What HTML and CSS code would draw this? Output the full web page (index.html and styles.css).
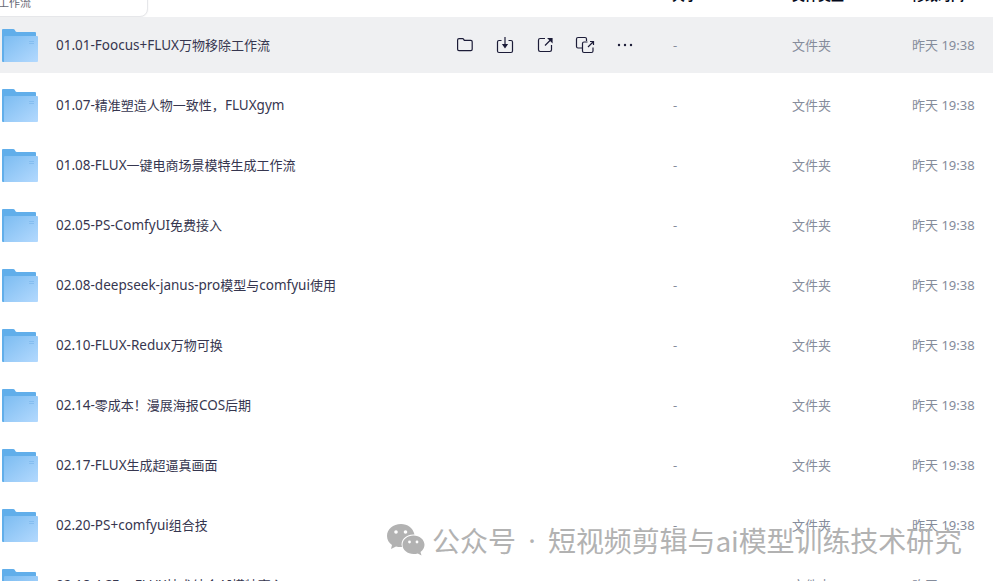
FILE: index.html
```html
<!DOCTYPE html>
<html lang="zh-CN">
<head>
    <meta charset="UTF-8">
    <meta name="viewport" content="width=device-width, initial-scale=1.0">
    <title>工作流</title>
    <link rel="stylesheet" href="styles.css">
</head>
<body>
    <svg width="0" height="0" class="defs">
        <defs>
            <linearGradient id="front" x1="0" y1="0" x2="1" y2="1">
                <stop offset="0" stop-color="#7cbcf1"/>
                <stop offset="1" stop-color="#b3d9fe"/>
            </linearGradient>
            <symbol id="folder" viewBox="0 0 40 40">
                <path fill="#61aeea" d="M2 5q0-1 1-1h10.200q1 0 1.500.8l.8 1.500q.4.700 1.300.7H35q1 0 1 1v29H3q-1 0-1-1z"/>
                <path fill="url(#front)" d="M4 12q0-1 1-1h32q1 0 1 1v24q0 1-1 1H4z"/>
                <path fill="#84bdf0" d="M29 16h5v1h-5zM29 18h5v1h-5z"/>
            </symbol>
        </defs>
    </svg>

    <div class="header">
        <span class="name"></span>
        <span class="size">大小</span>
        <span class="type">文件类型</span>
        <span class="time">修改时间</span>
    </div>
    <div class="tooltip">工作流</div>

    <div class="list" id="list">
        <div class="row active">
            <svg class="folder"><use href="#folder"/></svg>
            <span class="name"><span class="latin">01.01-Foocus+FLUX</span>万物移除工作流</span>
            <div class="actions">
                <svg viewBox="0 0 20 20"><path d="M2.600 5q0-1.400 1.400-1.400h3.700q.5 0 .8.500l.8 1.300h6.500q1.400 0 1.400 1.400v7.400q0 1.400-1.400 1.400H4q-1.400 0-1.400-1.400z"/></svg>
                <svg viewBox="0 0 20 20"><path d="M6.500 5.500H4q-1.500 0-1.500 1.500v9q0 1.500 1.500 1.500h12q1.500 0 1.500-1.500V7q0-1.500-1.500-1.500h-2.500M10 2v8"/><path class="solid" d="M8 9.500h4l-2 3z"/></svg>
                <svg viewBox="0 0 20 20"><path d="M10 3.500H5.200q-1.700 0-1.700 1.700v9.600q0 1.700 1.700 1.700h9.600q1.700 0 1.700-1.700V10M10 10.500l6-6"/><path class="solid" d="M13.500 3.500H17V7z"/></svg>
                <svg viewBox="0 0 20 20"><path d="M11.500 6V4q0-1.500-1.500-1.500H3Q1.500 2.500 1.500 4v7.500Q1.500 13 3 13h4M12.500 7H9Q7.500 7 7.500 8.500V16q0 1.500 1.500 1.500h7.500q1.500 0 1.500-1.500v-3.500M13 12l5-5M15 6.500h3.500V10"/></svg>
                <svg viewBox="0 0 20 20" class="more"><circle cx="4" cy="10" r="1.200"/><circle cx="10" cy="10" r="1.200"/><circle cx="16" cy="10" r="1.200"/></svg>
            </div>
            <span class="size">-</span>
            <span class="type">文件夹</span>
            <span class="time">昨天 19:38</span>
        </div>
    </div>

    <div class="watermark">
        <svg viewBox="0 0 38 32">
            <path d="M14 0C6 0 0 5.300 0 12c0 4 2 7 5 9l-1 4 5-2.600c2 .5 3.500.7 6 .6-2-7 4-13 12.500-12.500C26 4 20.500 0 14 0z"/>
            <path d="M26.500 11.500c-6 0-11 4-11 9.300s5 9.200 11 9.200c1.500 0 3-.2 4.300-.6l3.700 2-1-3.400c2.500-1.700 4-4.300 4-7.200 0-5.200-5-9.300-11-9.300z"/>
            <g fill="#fff"><circle cx="9" cy="8" r="1.800"/><circle cx="18.500" cy="8" r="1.800"/><circle cx="22.500" cy="18" r="1.400"/><circle cx="30" cy="18" r="1.400"/></g>
        </svg>
        <span>公众号</span><span class="dot">·</span><span class="account">短视频剪辑与ai模型训练技术研究</span>
    </div>

    <script>
        const files = [
            '01.07-精准塑造人物一致性，FLUXgym',
            '01.08-FLUX一键电商场景模特生成工作流',
            '02.05-PS-ComfyUI免费接入',
            '02.08-deepseek-janus-pro模型与comfyui使用',
            '02.10-FLUX-Redux万物可换',
            '02.14-零成本！漫展海报COS后期',
            '02.17-FLUX生成超逼真画面',
            '02.20-PS+comfyui组合技',
            '02.18-ACE++FLUX技术结合AI模特离心'
        ];

        const list = document.getElementById('list');
        files.forEach((name) => {
            const row = document.createElement('div');
            row.className = 'row';
            row.innerHTML = `
                <svg class="folder"><use href="#folder"/></svg>
                <span class="name">${name.replace(/[\w.+-]+/g, '<span class="latin">$&</span>')}</span>
                <span class="size">-</span>
                <span class="type">文件夹</span>
                <span class="time">昨天 19:38</span>`;
            list.appendChild(row);
        });
    </script>
</body>
</html>
```
FILE: styles.css
```css
* {
    margin: 0;
    padding: 0;
    box-sizing: border-box;
}

html {
    overflow: hidden;
}

body {
    height: 581px;
    overflow: hidden;
    background: #fff;
    color: #36364f;
    font-family: "Noto Sans", "Noto Sans CJK SC", sans-serif;
    font-size: 13px;
    white-space: nowrap;
}

.defs {
    position: absolute;
}

.header {
    display: flex;
    height: 17px;
    color: #03081a;
    font-weight: bold;
    line-height: 20px;
}

.header span {
    margin-top: -15px;
}

.header .name {
    margin-left: 56px;
}

.tooltip {
    position: absolute;
    left: -20px;
    top: -20px;
    width: 168px;
    height: 37px;
    padding: 12px 0 0 17px;
    border: 1px solid #e6e7ea;
    border-radius: 8px;
    background: #fff;
    box-shadow: 0 0 2px #eee;
    color: #666874;
    font-size: 11px;
    line-height: 20px;
}

.list {
    height: 564px;
    overflow: hidden;
}

.row {
    display: flex;
    align-items: center;
    height: 56px;
    margin-bottom: 4px;
    line-height: 20px;
}

.active {
    background: #eff0f2;
}

.folder {
    width: 40px;
    height: 40px;
    margin-right: 16px;
}

.name {
    flex: 1;
    padding-bottom: 1px;
}

.latin {
    font-size: 13.5px;
    line-height: 1;
}

.actions {
    display: flex;
    gap: 20px;
    margin-right: 37px;
}

.actions svg {
    width: 20px;
    height: 20px;
    fill: none;
    stroke: #1c1c38;
    stroke-width: 1.2;
}

.actions .solid {
    fill: #1c1c38;
}

.actions .more {
    fill: #1c1c38;
    stroke: none;
}

.size,
.type {
    width: 120px;
}

.time {
    width: 81px;
}

.row .size,
.row .type,
.row .time {
    color: #858c9b;
}

.row .size {
    padding-left: 1px;
}

.watermark {
    position: absolute;
    left: 387px;
    top: 519px;
    display: flex;
    align-items: center;
    height: 42px;
    color: #b2b2b2;
    font-family: "Noto Sans CJK SC", sans-serif;
    font-size: 28px;
}

.watermark svg {
    width: 38px;
    height: 32px;
    margin-right: 7px;
    fill: #b2b2b2;
}

.dot {
    width: 32px;
    font-family: "Noto Sans", sans-serif;
    text-align: center;
}

.account {
    letter-spacing: -0.1px;
}
```
